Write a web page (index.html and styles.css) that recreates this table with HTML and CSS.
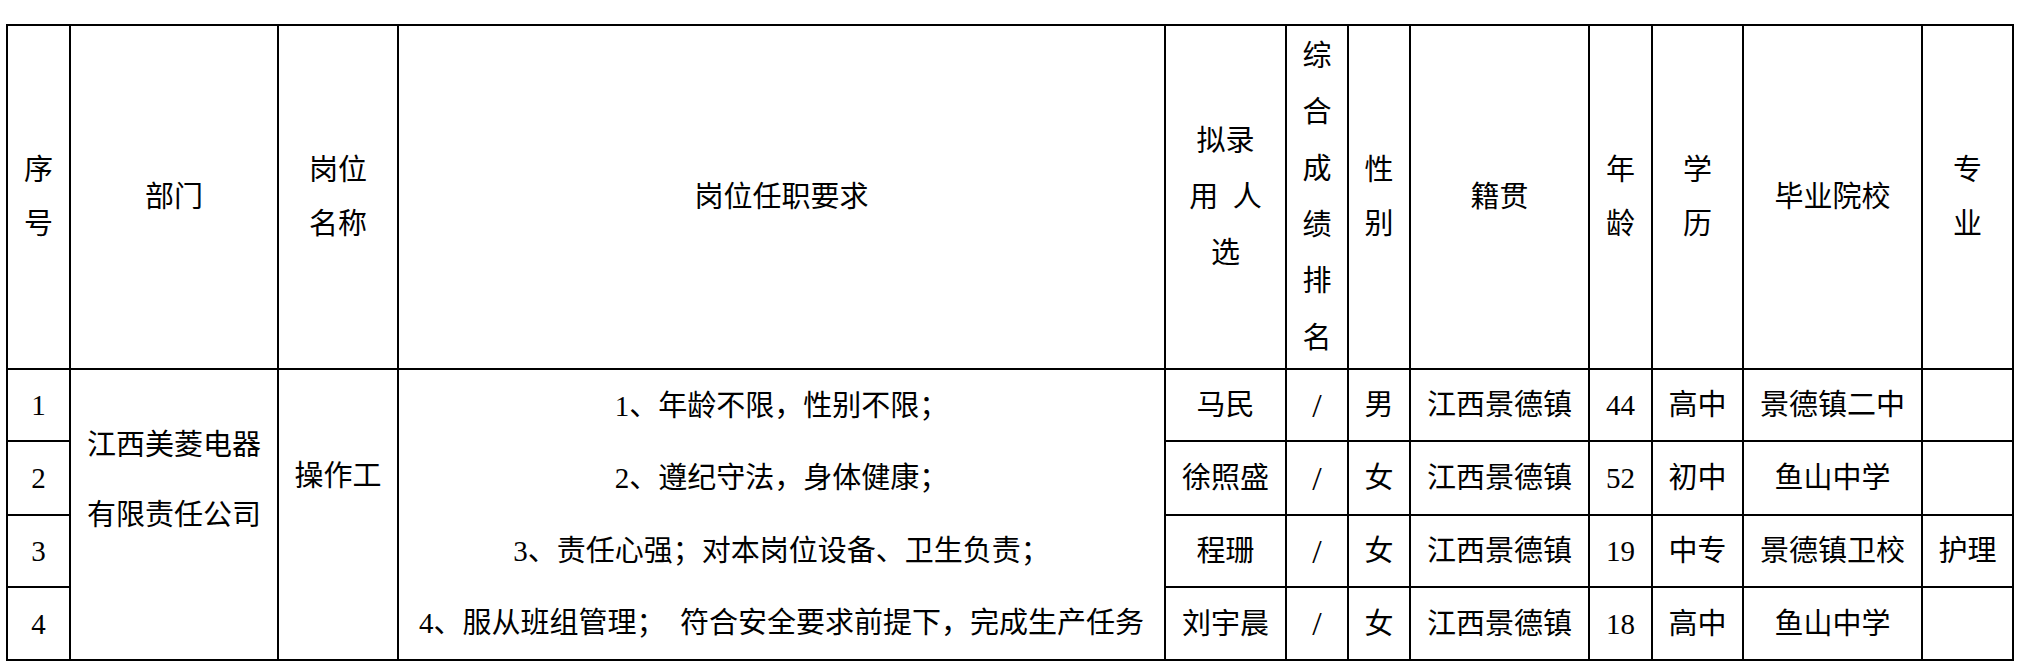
FILE: index.html
```html
<!DOCTYPE html>
<html lang="zh-CN">
<head>
<meta charset="utf-8">
<title>拟录用人员名单</title>
<link rel="stylesheet" href="styles.css">
</head>
<body>
<div class="page">
<table class="roster">
  <colgroup>
    <col class="c-no"><col class="c-dept"><col class="c-post"><col class="c-req"><col class="c-name"><col class="c-rank"><col class="c-sex"><col class="c-origin"><col class="c-age"><col class="c-edu"><col class="c-school"><col class="c-major">
  </colgroup>
  <thead>
    <tr class="head-row">
      <th class="two">序<br>号</th>
      <th>部门</th>
      <th class="two">岗位<br>名称</th>
      <th>岗位任职要求</th>
      <th class="three">拟录<br>用&ensp;人<br>选</th>
      <th class="six">综<br>合<br>成<br>绩<br>排<br>名</th>
      <th class="two">性<br>别</th>
      <th>籍贯</th>
      <th class="two">年<br>龄</th>
      <th class="two">学<br>历</th>
      <th>毕业院校</th>
      <th class="two">专<br>业</th>
    </tr>
  </thead>
  <tbody>
    <tr class="r1">
      <td>1</td>
      <td rowspan="4" class="dept"><div class="lines70">江西美菱电器<br>有限责任公司</div></td>
      <td rowspan="4" class="post">操作工</td>
      <td rowspan="4" class="req">
        <div class="req-line">1、年龄不限，性别不限；</div>
        <div class="req-line">2、遵纪守法，身体健康；</div>
        <div class="req-line">3、责任心强；对本岗位设备、卫生负责；</div>
        <div class="req-line">4、服从班组管理；&ensp;符合安全要求前提下，完成生产任务</div>
      </td>
      <td>马民</td>
      <td><span class="slash">/</span></td>
      <td>男</td>
      <td>江西景德镇</td>
      <td>44</td>
      <td>高中</td>
      <td>景德镇二中</td>
      <td></td>
    </tr>
    <tr class="r2">
      <td>2</td>
      <td>徐照盛</td>
      <td><span class="slash">/</span></td>
      <td>女</td>
      <td>江西景德镇</td>
      <td>52</td>
      <td>初中</td>
      <td>鱼山中学</td>
      <td></td>
    </tr>
    <tr class="r3">
      <td>3</td>
      <td>程珊</td>
      <td><span class="slash">/</span></td>
      <td>女</td>
      <td>江西景德镇</td>
      <td>19</td>
      <td>中专</td>
      <td>景德镇卫校</td>
      <td>护理</td>
    </tr>
    <tr class="r4">
      <td>4</td>
      <td>刘宇晨</td>
      <td><span class="slash">/</span></td>
      <td>女</td>
      <td>江西景德镇</td>
      <td>18</td>
      <td>高中</td>
      <td>鱼山中学</td>
      <td></td>
    </tr>
  </tbody>
</table>
</div>
</body>
</html>
```

FILE: styles.css
```css
html, body {
  margin: 0;
  padding: 0;
  background: #ffffff;
}

.page {
  padding: 24px 0 0 6px;
}

.roster {
  border-collapse: collapse;
  table-layout: fixed;
  width: 2008px;
  font-family: "Liberation Serif", "Noto Sans CJK SC", serif;
  font-size: 29px;
  font-weight: 400;
  color: #000000;
}

.roster th,
.roster td {
  border: 2px solid #000000;
  padding: 0;
  text-align: center;
  vertical-align: middle;
  font-weight: 400;
  white-space: nowrap;
  line-height: 36px;
}

.c-no { width: 63px; }
.c-dept { width: 208px; }
.c-post { width: 120px; }
.c-req { width: 767px; }
.c-name { width: 121px; }
.c-rank { width: 62px; }
.c-sex { width: 62px; }
.c-origin { width: 179px; }
.c-age { width: 63px; }
.c-edu { width: 91px; }
.c-school { width: 179px; }
.c-major { width: 91px; }

.head-row { height: 344px; }
.r1 { height: 72px; }
.r2 { height: 73px; }
.r3 { height: 72px; }
.r4 { height: 72px; }

.roster th.two { line-height: 54px; }
.roster th.three { line-height: 56px; }
.roster th.six { line-height: 56.4px; }

.roster td.dept {
  padding-bottom: 70px;
}

.lines70 {
  line-height: 70px;
}

.roster td.post {
  padding-bottom: 77px;
}

.req-line {
  height: 72.25px;
  line-height: 72.25px;
}

.slash {
  font-size: 34px;
  display: inline-block;
  transform: translateY(1px);
}
```
